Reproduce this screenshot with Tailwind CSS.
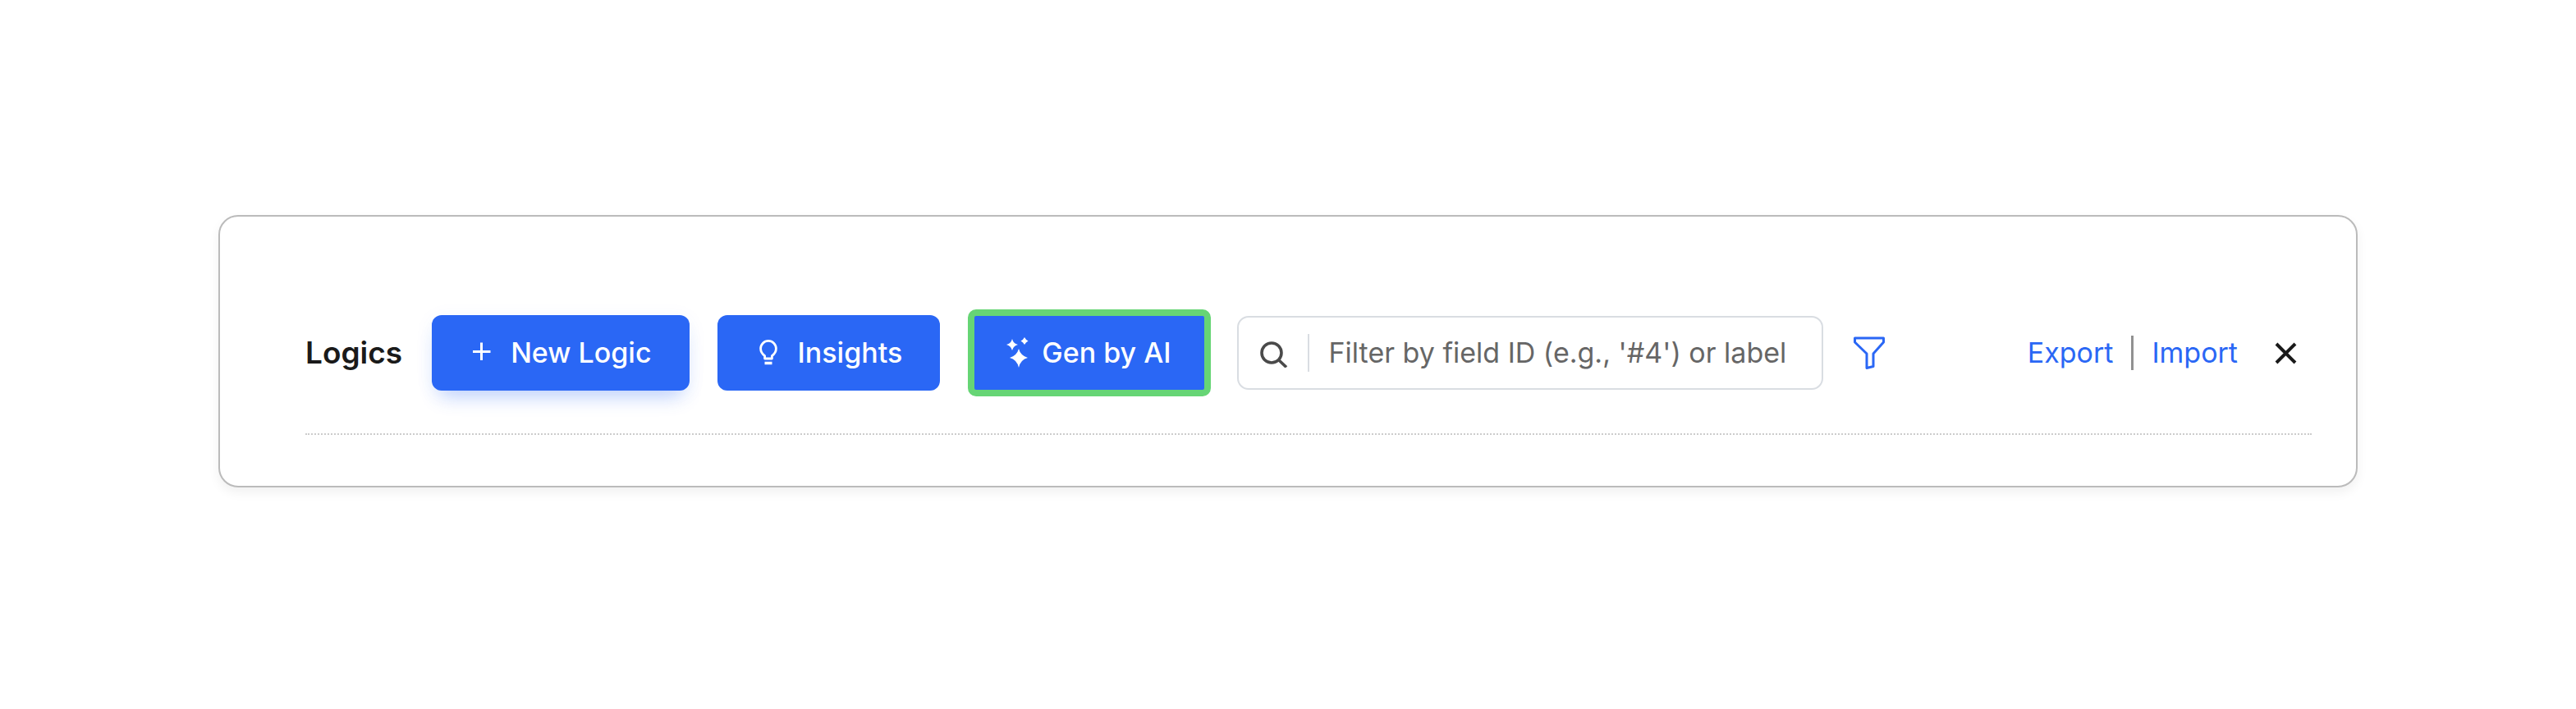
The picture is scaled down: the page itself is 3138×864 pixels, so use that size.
<!DOCTYPE html>
<html lang="en">

<head>
  <meta charset="utf-8" />
  <title>Logics</title>
  <meta name="viewport" content="width=device-width, initial-scale=1" />
  <script src="https://cdn.jsdelivr.net/npm/@tailwindcss/browser@4"></script>
</head>

<body class="bg-white font-['Inter',sans-serif] text-[34px] leading-[44px] text-[#1a1a1a]">
  <main class="min-h-screen flex items-center px-[266px] pb-2">
    <section class="w-full border-2 border-[#bbbbbb] rounded-[24px] bg-white pt-[113px] pb-[62px] pl-[104px] pr-[54px] shadow-[0_6px_14px_rgba(0,0,0,0.06)]">
      <header class="flex items-center pb-[45px] border-b-2 border-dotted border-[#cccccc]">
        <h1 class="mr-9 text-[37px] font-semibold">Logics</h1>

        <div class="flex items-center gap-[34px]">
          <button type="button" class="h-[92px] pl-11 pr-[46px] flex items-center gap-5 rounded-[12px] bg-[#2a67f5] text-white font-medium whitespace-nowrap shadow-[0_16px_24px_-10px_rgba(42,103,245,0.3),0_4px_24px_rgba(42,103,245,0.06)]">
            <svg class="w-8 h-8" viewBox="0 0 32 32" fill="none" stroke="currentColor" stroke-width="3" aria-hidden="true">
              <path d="M16.5 3.5v21.5M6 14.500h21.500" />
            </svg>
            New Logic
          </button>

          <button type="button" class="h-[92px] pl-11 pr-[46px] flex items-center gap-[18px] rounded-[12px] bg-[#2a67f5] text-white font-medium whitespace-nowrap">
            <svg class="w-9 h-9" viewBox="0 0 36 36" fill="none" stroke="currentColor" stroke-width="2.8" aria-hidden="true">
              <path d="M13.6 25v-3.4c-3-2.2-5-5-5-8.8a9.4 9.4 0 0 1 18.8 0c0 3.8-2 6.6-5 8.8v3.400z" stroke-linejoin="round" />
              <path d="M13.500 30.500h9" stroke-width="3.500" />
            </svg>
            Insights
          </button>

          <button type="button" class="h-[106px] pl-[38px] pr-10 flex items-center gap-3 rounded-[10px] border-8 border-[#66d575] bg-[#2a67f5] text-white font-medium whitespace-nowrap">
            <svg class="w-8 h-10" viewBox="0 0 32 40" fill="currentColor" aria-hidden="true">
              <path d="M16 15q2.200 8.300 11 11-8.800 2.200-11 12-2.200-9.800-11-12 8.800-2.700 11-11z" />
              <path d="M8 3q1.400 5.600 7 7-5.600 1.400-7 7-1.400-5.600-7-7 5.600-1.400 7-7z" />
              <path d="M23 1q1.500 3 4.500 4.500-3 1.500-4.500 4.500-1.500-3-4.500-4.500 3-1.500 4.500-4.500z" />
            </svg>
            Gen by AI
          </button>
        </div>

        <label class="ml-8 w-[714px] h-[90px] flex items-center border-2 border-[#d9dde2] rounded-[14px]">
          <svg class="ml-6 w-9 h-9 shrink-0" viewBox="0 0 36 36" fill="none" stroke="#4a4a4a" stroke-width="3.6" aria-hidden="true">
            <circle cx="16" cy="18" r="12" />
            <path d="M24.5 26.5l9.500 9" />
          </svg>
          <span class="ml-6 w-[2px] h-[46px] bg-[#d9dde2]"></span>
          <input type="text" aria-label="Filter logics" placeholder="Filter by field ID (e.g., '#4') or label" class="ml-6 flex-1 min-w-0 outline-none placeholder:text-[#666666]" />
        </label>

        <button type="button" aria-label="Filter" class="ml-9 text-[#2a67f5]">
          <svg class="w-10 h-10" viewBox="0 0 40 40" fill="none" stroke="currentColor" stroke-width="3" stroke-linejoin="round" aria-hidden="true">
            <path d="M2.5 2h35v5L25 21v15.5l-8 2V21L2.5 7z" />
          </svg>
        </button>

        <nav class="ml-auto flex items-center text-[#2a67f5]">
          <a href="#">Export</a>
          <span class="mx-[22px] w-[3px] h-[42px] bg-[#919191]"></span>
          <a href="#">Import</a>
        </nav>
        <button type="button" aria-label="Close" class="ml-[38px] mr-3">
          <svg class="w-10 h-10" viewBox="0 0 40 40" fill="none" stroke="#1a1a1a" stroke-width="4" aria-hidden="true">
            <path d="M9 9l23 23M32 9L9 32" />
          </svg>
        </button>
      </header>
    </section>
  </main>
</body>

</html>
